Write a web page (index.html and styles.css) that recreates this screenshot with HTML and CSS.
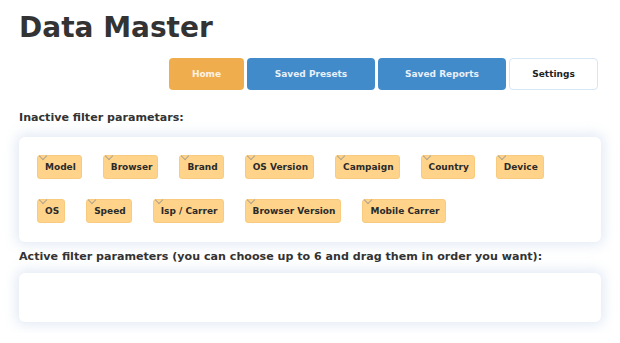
FILE: index.html
```html
<!DOCTYPE html>
<html lang="en">
  <head>
    <meta charset="UTF-8" />
    <meta name="viewport" content="width=device-width, initial-scale=1.0" />
    <title>Data Master</title>
    <link rel="stylesheet" href="styles.css">
  </head>
  <body>
    <div class="container">
      <h1>Data Master</h1>

      <div class="nav">
        <a class="btn btn-home">Home</a>
        <a class="btn btn-blue">Saved Presets</a>
        <a class="btn btn-blue">Saved Reports</a>
        <a class="btn btn-white">Settings</a>
      </div>

      <h3 class="title-inactive">Inactive filter parametars:</h3>
      <div class="panel">
        <span class="chip">Model</span>
        <span class="chip">Browser</span>
        <span class="chip">Brand</span>
        <span class="chip">OS Version</span>
        <span class="chip">Campaign</span>
        <span class="chip">Country</span>
        <span class="chip">Device</span>
        <span class="chip">OS</span>
        <span class="chip">Speed</span>
        <span class="chip">Isp / Carrer</span>
        <span class="chip">Browser Version</span>
        <span class="chip">Mobile Carrer</span>
      </div>

      <h3 class="title-active">Active filter parameters (you can choose up to 6 and drag them in order you want):</h3>
      <div class="panel panel-empty"></div>
    </div>
  </body>
</html>
```

FILE: styles.css
```css
body {
  margin: 0;
  font-family: "DejaVu Sans", sans-serif;
  background-color: #ffffff;
  color: #333333;
}
.container {
  padding: 11px 19px;
}
h1 {
  margin: 0;
  font-size: 28px;
  line-height: 34px;
  font-weight: bold;
  color: #333333;
}
.nav {
  display: flex;
  justify-content: flex-end;
  gap: 2px;
  margin-top: 13px;
  padding-right: 3px;
}
.btn {
  display: flex;
  align-items: center;
  justify-content: center;
  height: 32px;
  box-sizing: border-box;
  border-radius: 4px;
  font-size: 9px;
  font-weight: bold;
  cursor: pointer;
}
.btn-home {
  width: 75px;
  background: #f0ad4e;
  color: #fdf3e3;
}
.btn-blue {
  width: 128px;
  margin-left: 1px;
  background: #428bca;
  color: #e8f0f9;
}
.btn-white {
  width: 89px;
  margin-left: 1px;
  background: #ffffff;
  border: 1px solid #d6e6f5;
  color: #222222;
}
h3 {
  font-size: 11.1px;
  line-height: 14px;
  font-weight: bold;
  color: #333333;
}
.title-inactive {
  margin: 21px 0 12px;
}
.title-active {
  margin: 8px 0 9px;
}
.panel {
  display: flex;
  flex-wrap: wrap;
  gap: 20px 21px;
  padding: 18px 18px 19px;
  background: #ffffff;
  border-radius: 6px;
  box-shadow: 0px 0px 12px 4px rgba(200, 215, 235, 0.45);
}
.panel-empty {
  height: 49px;
  box-sizing: border-box;
}
.chip {
  position: relative;
  height: 24px;
  box-sizing: border-box;
  padding: 0 5px 0 7px;
  display: flex;
  align-items: center;
  background: #ffd48a;
  border: 1px solid #f8cb7e;
  border-radius: 3px;
  font-size: 9px;
  font-weight: bold;
  color: #2a2a2a;
  cursor: move;
}
.chip::before {
  content: "";
  position: absolute;
  left: 2px;
  top: -3px;
  width: 5px;
  height: 5px;
  border-right: 1px solid #b0a48e;
  border-bottom: 1px solid #b0a48e;
  transform: rotate(45deg);
}
```
